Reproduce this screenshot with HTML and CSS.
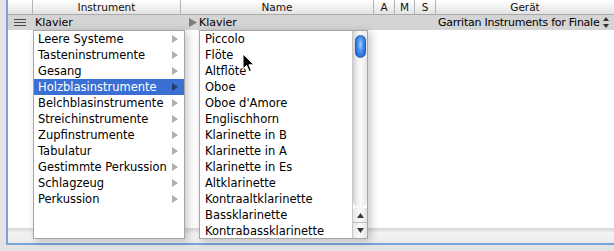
FILE: index.html
```html
<!DOCTYPE html>
<html>
<head>
<meta charset="utf-8">
<link rel="stylesheet" href="styles.css">
</head>
<body>
<div class="window">
  <div class="table">
    <div class="header">
      <div class="hcell"></div>
      <div class="hcell">Instrument</div>
      <div class="hcell">Name</div>
      <div class="hcell">A</div>
      <div class="hcell">M</div>
      <div class="hcell">S</div>
      <div class="hcell last">Gerät</div>
    </div>
    <div class="band">
      <div class="bcell icon">
        <svg width="12" height="8" viewBox="0 0 12 8"><path d="M0 0.5H12M0 3.5H12M0 6.5H12" stroke="#4a4a4a" stroke-width="1"/></svg>
      </div>
      <div class="bcell">Klavier</div>
      <div class="bcell name">
        <svg class="tri" width="8" height="9" viewBox="0 0 8 9"><path d="M0 0L8 4.5L0 9Z" fill="#7d7d7d"/></svg>Klavier
      </div>
      <div class="bcell"></div>
      <div class="bcell"></div>
      <div class="bcell"></div>
      <div class="bcell dev"><span class="devname">Garritan Instruments for Finale</span>
        <svg class="updown" width="6" height="11" viewBox="0 0 6 11"><path d="M3 0L6 4H0Z M3 11L6 7H0Z" fill="#333"/></svg>
      </div>
    </div>
    <div class="body"></div>
    <div class="footer"></div>
  </div>

  <div class="menu menu-cat">
    <div class="item">Leere Systeme<span class="arrow"></span></div>
    <div class="item">Tasteninstrumente<span class="arrow"></span></div>
    <div class="item">Gesang<span class="arrow"></span></div>
    <div class="item selected">Holzblasinstrumente<span class="arrow"></span></div>
    <div class="item">Belchblasinstrumente<span class="arrow"></span></div>
    <div class="item">Streichinstrumente<span class="arrow"></span></div>
    <div class="item">Zupfinstrumente<span class="arrow"></span></div>
    <div class="item">Tabulatur<span class="arrow"></span></div>
    <div class="item">Gestimmte Perkussion<span class="arrow"></span></div>
    <div class="item">Schlagzeug<span class="arrow"></span></div>
    <div class="item">Perkussion<span class="arrow"></span></div>
  </div>

  <div class="menu menu-inst">
    <div class="list">
      <div class="item">Piccolo</div>
      <div class="item">Flöte</div>
      <div class="item">Altflöte</div>
      <div class="item">Oboe</div>
      <div class="item">Oboe d'Amore</div>
      <div class="item">Englischhorn</div>
      <div class="item">Klarinette in B</div>
      <div class="item">Klarinette in A</div>
      <div class="item">Klarinette in Es</div>
      <div class="item">Altklarinette</div>
      <div class="item">Kontraaltklarinette</div>
      <div class="item">Bassklarinette</div>
      <div class="item">Kontrabassklarinette</div>
    </div>
    <div class="scrollbar">
      <div class="track">
        <div class="thumb"></div>
      </div>
      <div class="btn up"><svg width="7" height="5" viewBox="0 0 7 5"><path d="M3.5 0L7 5H0Z" fill="#3a3a3a"/></svg></div>
      <div class="btn down"><svg width="7" height="5" viewBox="0 0 7 5"><path d="M3.5 5L7 0H0Z" fill="#3a3a3a"/></svg></div>
    </div>
  </div>

  <svg class="cursor" width="13" height="20" viewBox="0 0 13 20">
    <path d="M1 1V16L4.6 12.6L7.2 18.6L9.4 17.6L6.9 11.8H11.8Z" fill="#000" stroke="#fff" stroke-width="1"/>
  </svg>
</div>
</body>
</html>
```

FILE: styles.css
```css
* { box-sizing: border-box; }
html, body { margin: 0; padding: 0; }
body {
  width: 614px;
  height: 251px;
  overflow: hidden;
  background: #e6e6e6;
  font-family: "DejaVu Sans", "Liberation Sans", sans-serif;
  color: #000;
}
.window {
  position: relative;
  width: 614px;
  height: 251px;
  padding-left: 6px;
  background: #e4e4e4;
}
.table {
  height: 245px;
  border-left: 2px solid #79a2d8;
  border-bottom: 2px solid #79a2d8;
  background: #fff;
  display: flex;
  flex-direction: column;
}
.header, .band {
  display: grid;
  grid-template-columns: 25px 148px 193px 21px 20px 21px 1fr;
}
.header {
  height: 15px;
  background: linear-gradient(#ffffff, #f1f1f1 50%, #e2e2e2);
  border-bottom: 1px solid #a9a9a9;
}
.hcell {
  border-right: 1px solid #b4b4b4;
  font-size: 10.5px;
  line-height: 14px;
  text-align: center;
  color: #111;
}
.hcell.last { border-right: none; }
.band {
  height: 15px;
  background: #d4d4d4;
  font-size: 11px;
  line-height: 15px;
}
.bcell { padding-left: 2px; white-space: nowrap; }
.bcell.icon { display: flex; align-items: center; padding-left: 6px; }
.bcell.name { display: flex; align-items: center; padding-left: 8px; }
.tri { margin-right: 2px; }
.bcell.dev {
  display: flex;
  align-items: center;
  justify-content: flex-end;
  padding-right: 8px;
  gap: 4px;
}
.devname { letter-spacing: -0.25px; }
.body { flex: 1; background: #fff; }
.footer {
  height: 15px;
  background: linear-gradient(#d6d6d6, #f3f3f3 35%, #ebebeb);
}

.menu {
  position: absolute;
  top: 30px;
  height: 209px;
  background: #fff;
  border: 1px solid #a6a6a6;
  box-shadow: 3px 2px 8px rgba(0, 0, 0, 0.22);
  font-size: 11.5px;
}
.menu-cat {
  left: 33px;
  width: 152px;
}
.menu-cat .item {
  position: relative;
  height: 16px;
  line-height: 16px;
  padding-left: 4px;
  white-space: nowrap;
}
.menu-cat .item.selected {
  background: #3a6fd3;
  color: #fff;
}
.arrow {
  position: absolute;
  right: 6px;
  top: 4px;
  width: 0;
  height: 0;
  border-top: 4px solid transparent;
  border-bottom: 4px solid transparent;
  border-left: 6px solid #b0b0b0;
}
.selected .arrow { border-left-color: #253e70; }

.menu-inst {
  left: 199px;
  width: 169px;
  display: flex;
}
.list { flex: 1; }
.menu-inst .item {
  height: 16px;
  line-height: 16px;
  padding-left: 5px;
  white-space: nowrap;
}
.scrollbar {
  width: 15px;
  display: flex;
  flex-direction: column;
  border-left: 1px solid #c8c8c8;
}
.track {
  flex: 1;
  background: linear-gradient(to right, #d2d2d2, #efefef 30%, #fbfbfb 55%, #e6e6e6);
  border-bottom-left-radius: 7px;
  border-bottom-right-radius: 7px;
  padding-top: 4px;
  display: flex;
  justify-content: center;
}
.thumb {
  width: 11px;
  height: 23px;
  border-radius: 6px;
  background: radial-gradient(ellipse at 50% 40%, #9ed0ff 0%, #4b93ee 40%, #1a5ad0 90%);
  border: 1px solid #2b5ea8;
}
.btn {
  height: 15px;
  display: flex;
  align-items: center;
  justify-content: center;
  background: linear-gradient(to right, #e8e8e8, #fafafa 50%, #e4e4e4);
}
.btn.up { border-bottom: 1px solid #bdbdbd; }
.cursor {
  position: absolute;
  left: 242px;
  top: 53px;
}
```
